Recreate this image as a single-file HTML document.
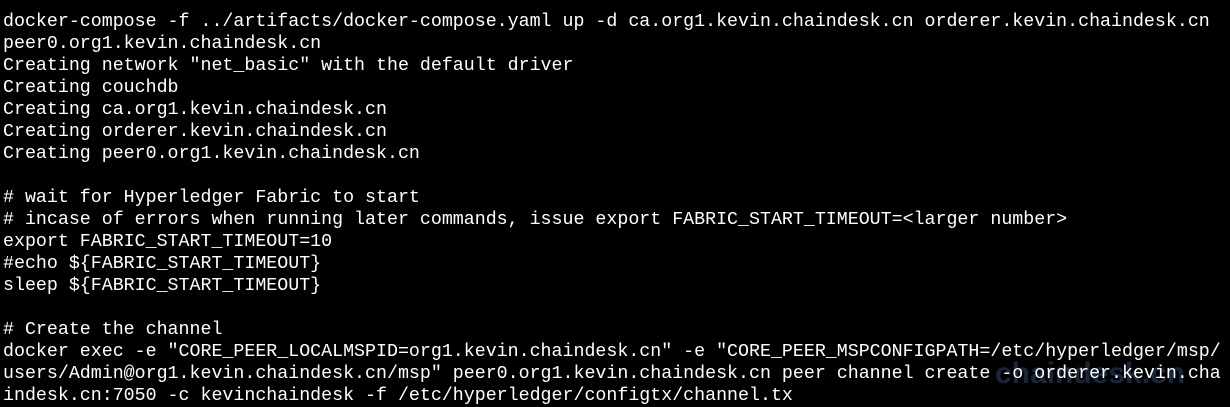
<!DOCTYPE html>
<html><head><style>
html,body{margin:0;padding:0;background:#000;width:1230px;height:401px;overflow:hidden}
pre{margin:0;position:absolute;left:3px;top:11px;color:#fff;font-family:"Liberation Mono",monospace;font-size:18.3px;line-height:22px;white-space:pre}
.wm{position:absolute;left:995px;top:357px;color:#1a2a44;font-family:"Liberation Sans",sans-serif;font-weight:bold;font-size:30px;opacity:.9}
</style></head><body>
<div class="wm">chaindesk.cn</div>
<pre>docker-compose -f ../artifacts/docker-compose.yaml up -d ca.org1.kevin.chaindesk.cn orderer.kevin.chaindesk.cn
peer0.org1.kevin.chaindesk.cn
Creating network "net_basic" with the default driver
Creating couchdb
Creating ca.org1.kevin.chaindesk.cn
Creating orderer.kevin.chaindesk.cn
Creating peer0.org1.kevin.chaindesk.cn

# wait for Hyperledger Fabric to start
# incase of errors when running later commands, issue export FABRIC_START_TIMEOUT=&lt;larger number&gt;
export FABRIC_START_TIMEOUT=10
#echo ${FABRIC_START_TIMEOUT}
sleep ${FABRIC_START_TIMEOUT}

# Create the channel
docker exec -e "CORE_PEER_LOCALMSPID=org1.kevin.chaindesk.cn" -e "CORE_PEER_MSPCONFIGPATH=/etc/hyperledger/msp/
users/Admin@org1.kevin.chaindesk.cn/msp" peer0.org1.kevin.chaindesk.cn peer channel create -o orderer.kevin.cha
indesk.cn:7050 -c kevinchaindesk -f /etc/hyperledger/configtx/channel.tx</pre>
</body></html>
